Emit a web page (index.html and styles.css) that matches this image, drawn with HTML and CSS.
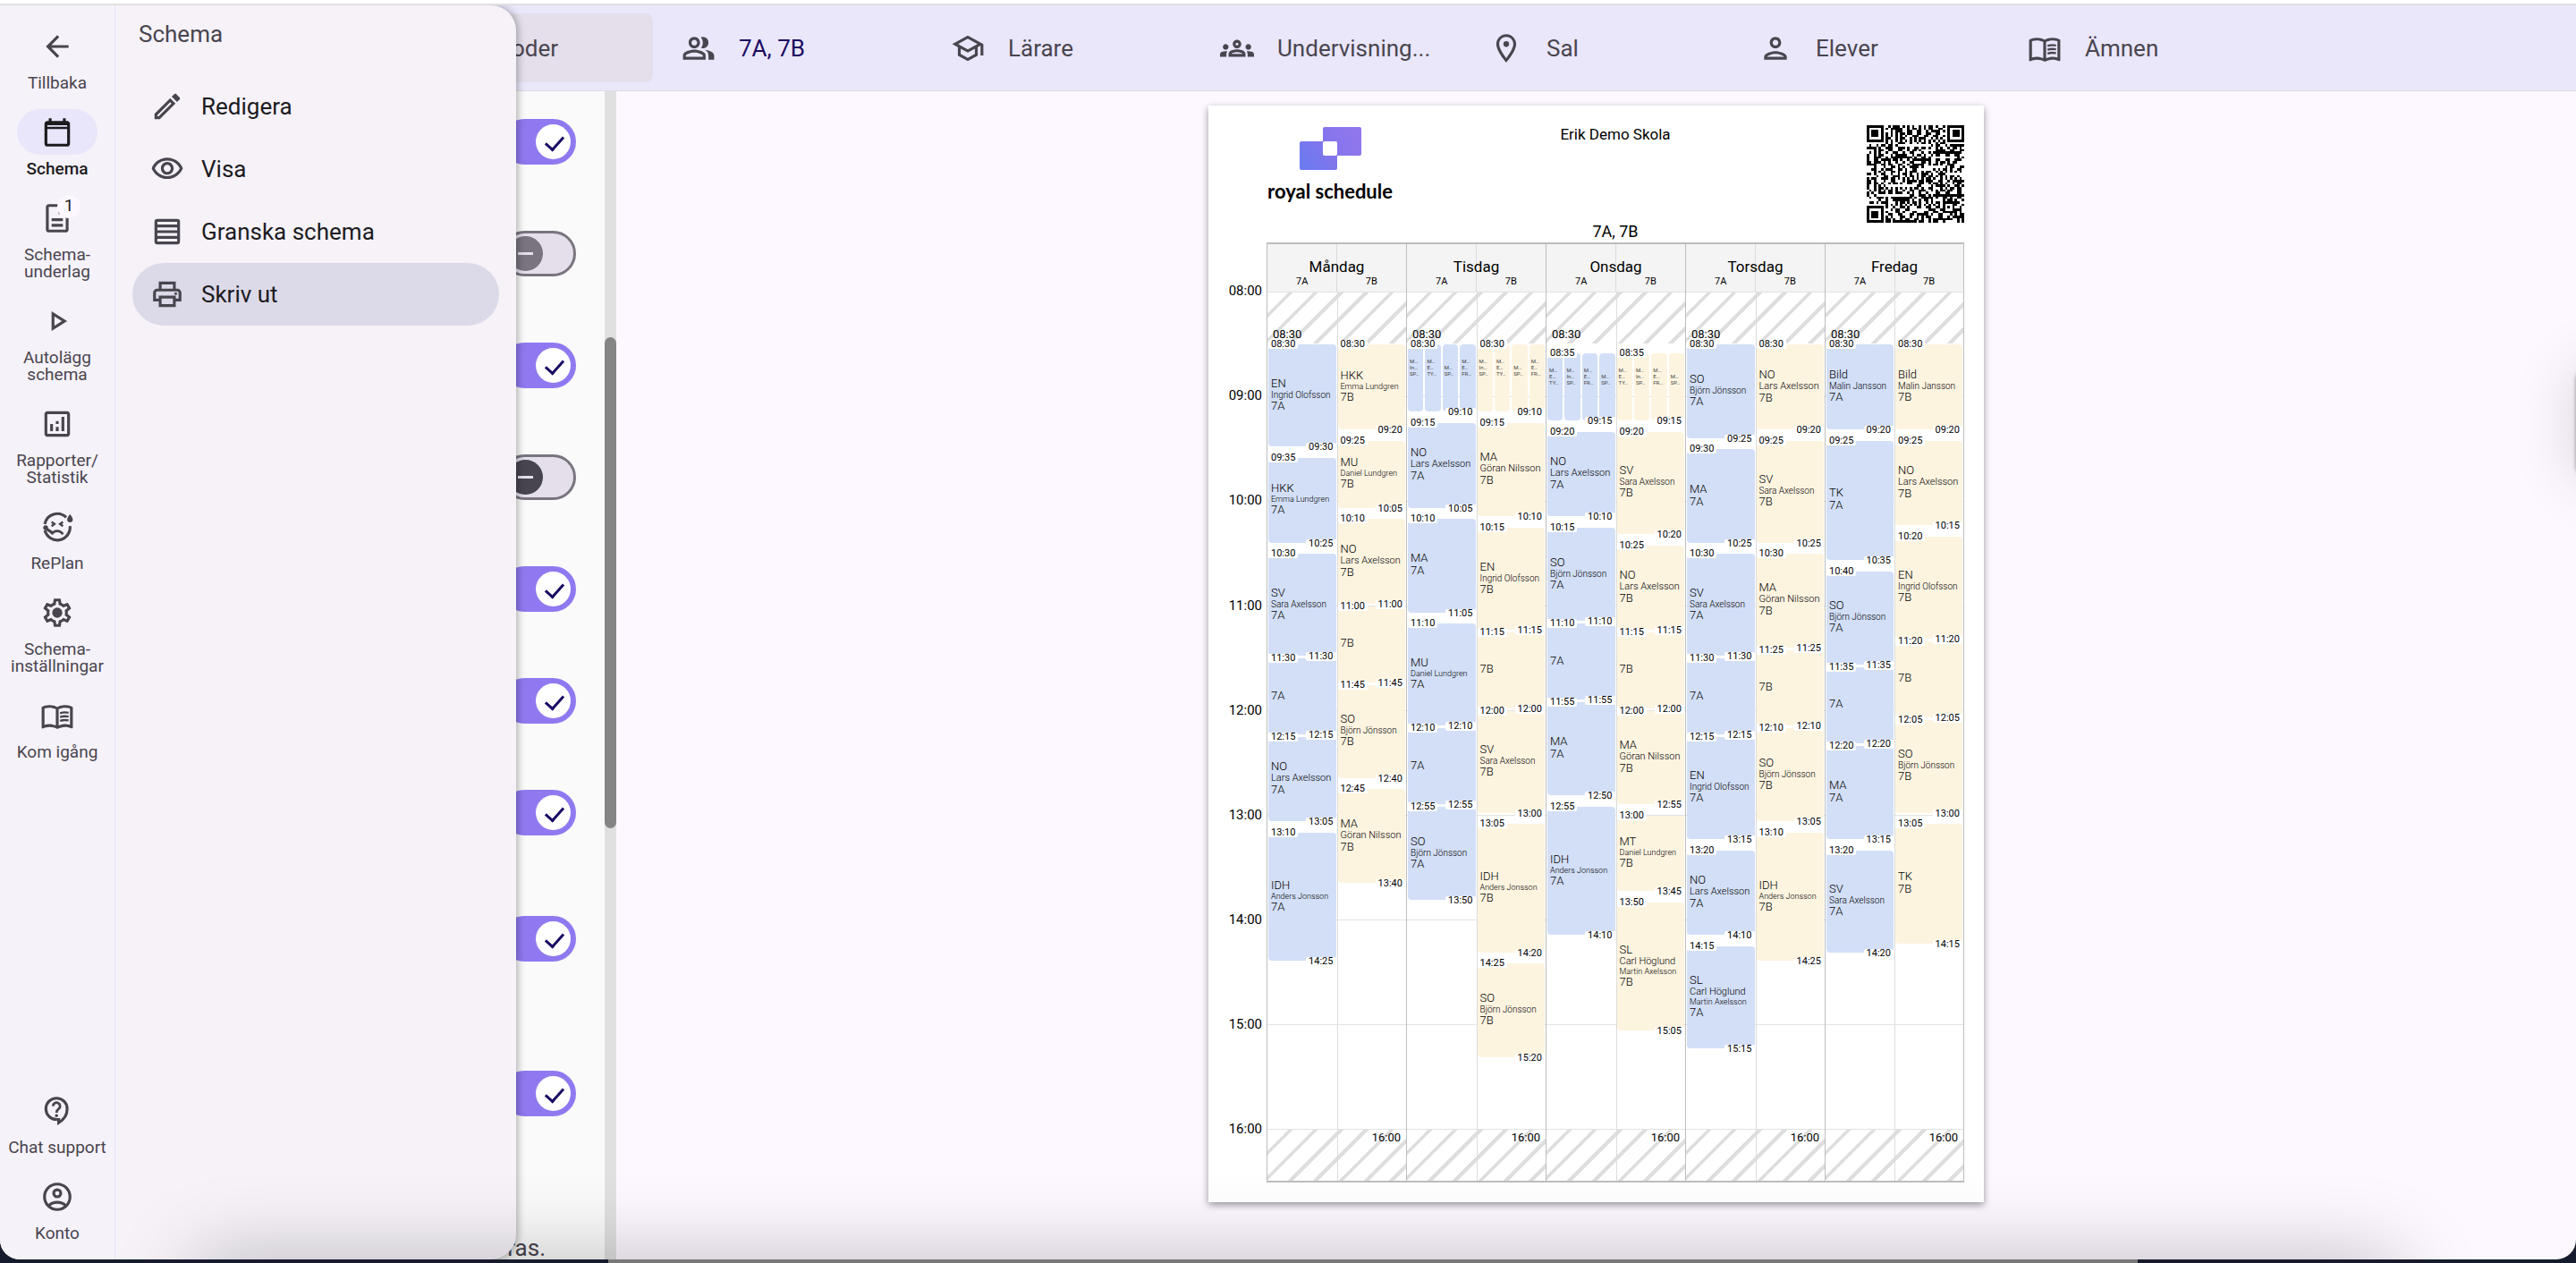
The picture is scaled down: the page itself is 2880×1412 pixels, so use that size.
FILE: index.html
```html
<!DOCTYPE html>
<html lang="sv">
<head>
<meta charset="utf-8">
<meta name="viewport" content="width=device-width, initial-scale=1">
<title>Royal Schedule – Skriv ut</title>
<link rel="stylesheet" href="styles.css">
</head>
<body>
<svg class="sprite" aria-hidden="true">
  <symbol id="i-back" viewBox="0 0 24 24"><path d="M20 11H7.83l5.59-5.59L12 4l-8 8 8 8 1.41-1.41L7.83 13H20v-2z"/></symbol>
  <symbol id="i-calendar" viewBox="0 0 24 24"><path fill-rule="evenodd" d="M19 4h-1V2h-2v2H8V2H6v2H5c-1.1 0-2 .9-2 2v14c0 1.1.9 2 2 2h14c1.1 0 2-.9 2-2V6c0-1.1-.9-2-2-2zm0 16H5V9.600h14V20zm0-12H5V7h14v1z"/></symbol>
  <symbol id="i-doc" viewBox="0 0 24 24"><path d="M8 16h8v2H8zm0-4h8v2H8zm6-10H6c-1.1 0-2 .9-2 2v16c0 1.1.89 2 1.99 2H18c1.1 0 2-.9 2-2V8l-6-6zm4 18H6V4h7v5h5v11z"/></symbol>
  <symbol id="i-play" viewBox="0 0 24 24"><path d="M10 8.640 15.270 12 10 15.360V8.640M8 5v14l11-7L8 5z"/></symbol>
  <symbol id="i-stats" viewBox="0 0 24 24"><path d="M19 3H5c-1.1 0-2 .9-2 2v14c0 1.1.9 2 2 2h14c1.1 0 2-.9 2-2V5c0-1.1-.9-2-2-2zm0 16H5V5h14v14zM7 12h2v5H7zM15 7h2v10h-2zM11 14h2v3h-2zM11 10h2v2h-2z"/></symbol>
  <symbol id="i-sick" viewBox="0 0 24 24">
    <g fill="none" stroke="currentColor" stroke-width="2">
      <path d="M18.300 5.300A9 9 0 0 0 3.200 10"/><path d="M3.300 14.500A9 9 0 0 0 21 11.500"/>
      <path stroke-width="1.600" d="M8 8.500l2 1.500-2 1.500M16 8.500l-2 1.500 2 1.500"/>
      <path d="M3.500 12.800l5 3.400"/><path stroke-width="1.800" d="M8 17.300c1-1.700 2.300-2.400 4-2.400s3 .7 4 2.400"/>
    </g>
    <circle cx="3.800" cy="12.600" r="1.700"/>
    <path d="M21 3s2 2.600 2 3.800a2 2 0 0 1-4 0C19 5.600 21 3 21 3z"/>
  </symbol>
  <symbol id="i-gear" viewBox="0 0 24 24"><path d="M19.43 12.98c.04-.32.07-.64.07-.98 0-.34-.03-.66-.07-.98l2.11-1.65c.19-.15.24-.42.12-.64l-2-3.46c-.09-.16-.26-.25-.44-.25-.06 0-.12.01-.17.03l-2.49 1c-.52-.4-1.08-.73-1.69-.98l-.38-2.65C14.46 2.18 14.25 2 14 2h-4c-.25 0-.46.18-.49.42l-.38 2.65c-.61.25-1.17.59-1.69.98l-2.49-1c-.06-.02-.12-.03-.18-.03-.17 0-.34.09-.43.25l-2 3.46c-.13.22-.07.49.12.64l2.11 1.65c-.04.32-.07.65-.07.98 0 .33.03.66.07.98l-2.11 1.65c-.19.15-.24.42-.12.64l2 3.46c.09.16.26.25.44.25.06 0 .12-.01.17-.03l2.49-1c.52.4 1.08.73 1.69.98l.38 2.65c.03.24.24.42.49.42h4c.25 0 .46-.18.49-.42l.38-2.65c.61-.25 1.17-.59 1.69-.98l2.49 1c.06.02.12.03.18.03.17 0 .34-.09.43-.25l2-3.46c.12-.22.07-.49-.12-.64l-2.11-1.65zm-1.98-1.71c.04.31.05.52.05.73 0 .21-.02.43-.05.73l-.14 1.13.89.7 1.08.84-.7 1.21-1.27-.51-1.04-.42-.9.68c-.43.32-.84.56-1.25.73l-1.06.43-.16 1.13-.2 1.35h-1.4l-.19-1.35-.16-1.13-1.06-.43c-.43-.18-.83-.41-1.23-.71l-.91-.7-1.06.43-1.27.51-.7-1.21 1.08-.84.89-.7-.14-1.13c-.03-.31-.05-.54-.05-.74s.02-.43.05-.73l.14-1.13-.89-.7-1.08-.84.7-1.21 1.27.51 1.04.42.9-.68c.43-.32.84-.56 1.25-.73l1.06-.43.16-1.13.2-1.35h1.39l.19 1.35.16 1.13 1.06.43c.43.18.83.41 1.23.71l.91.7 1.06-.43 1.27-.51.7 1.21-1.07.85-.89.7.14 1.13z"/><circle cx="12" cy="12" r="3.600"/></symbol>
  <symbol id="i-book" viewBox="0 0 24 24"><path d="M21 5c-1.110-.35-2.330-.5-3.500-.5-1.950 0-4.050.4-5.500 1.500-1.450-1.100-3.550-1.500-5.500-1.500S2.450 4.900 1 6v14.650c0 .25.25.5.5.5.1 0 .15-.05.25-.05C3.100 20.450 5.050 20 6.500 20c1.950 0 4.050.4 5.500 1.500 1.350-.85 3.800-1.500 5.500-1.500 1.650 0 3.350.3 4.750 1.050.1.05.15.05.25.05.25 0 .5-.25.5-.5V6c-.6-.45-1.250-.75-2-1zM3 18.500V7c1.100-.35 2.300-.5 3.500-.5 1.340 0 3.130.41 4.500.99v11.500C9.630 18.410 7.840 18 6.500 18c-1.200 0-2.400.15-3.500.5zm18 0c-1.100-.35-2.300-.5-3.500-.5-1.340 0-3.130.41-4.500.99V7.490c1.370-.59 3.160-.99 4.500-.99 1.200 0 2.400.15 3.500.5v11.500z"/><path fill="none" stroke="currentColor" stroke-width="1.500" d="M14 10.300c1.800-.6 4-.7 6-.3M14 13c1.800-.6 4-.7 6-.3M14 15.700c1.800-.6 4-.7 6-.3"/></symbol>
  <symbol id="i-support" viewBox="0 0 24 24"><path fill="none" stroke="currentColor" stroke-width="2" d="M13 18v2.300c3.700-2.300 6-5.900 6-9.800A7.500 7.500 0 1 0 11.500 18H13z"/><path fill="none" stroke="currentColor" stroke-width="1.800" d="M9 8.600a2.500 2.500 0 1 1 3.900 2.100c-.9.6-1.400 1.100-1.400 2.500"/><circle cx="11.500" cy="15.300" r="1.100"/></symbol>
  <symbol id="i-account" viewBox="0 0 24 24"><g fill="none" stroke="currentColor" stroke-width="2"><circle cx="12" cy="12" r="9"/><circle cx="12" cy="9.500" r="2.500"/><path d="M6 18.200c1.600-1.500 3.700-2.300 6-2.300s4.400.8 6 2.300"/></g></symbol>
  <symbol id="i-edit" viewBox="0 0 24 24"><path d="M14.060 9.020l.92.92L5.920 19H5v-.92l9.060-9.060M17.660 3c-.25 0-.51.1-.7.29l-1.830 1.830 3.750 3.750 1.830-1.830c.39-.39.39-1.020 0-1.410l-2.340-2.340c-.2-.2-.45-.29-.71-.29zm-3.600 3.190L3 17.250V21h3.750L17.810 9.940l-3.750-3.750z"/></symbol>
  <symbol id="i-eye" viewBox="0 0 24 24"><path d="M12 6c3.790 0 7.170 2.130 8.820 5.500C19.170 14.870 15.790 17 12 17s-7.170-2.130-8.820-5.500C4.830 8.130 8.210 6 12 6m0-2C7 4 2.730 7.110 1 11.500 2.730 15.890 7 19 12 19s9.270-3.110 11-7.500C21.270 7.110 17 4 12 4zm0 5c1.380 0 2.500 1.120 2.500 2.500S13.380 14 12 14s-2.500-1.120-2.500-2.500S10.620 9 12 9m0-2c-2.480 0-4.500 2.020-4.500 4.500S9.520 16 12 16s4.500-2.020 4.500-4.500S14.480 7 12 7z"/></symbol>
  <symbol id="i-rows" viewBox="0 0 24 24"><g fill="none" stroke="currentColor" stroke-width="2"><rect x="4" y="4" width="16" height="16" rx="1"/><path d="M4 8h16M4 12h16M4 16h16"/></g></symbol>
  <symbol id="i-print" viewBox="0 0 24 24"><path d="M19 8h-1V3H6v5H5c-1.660 0-3 1.340-3 3v6h4v4h12v-4h4v-6c0-1.660-1.340-3-3-3zM8 5h8v3H8V5zm8 12v2H8v-4h8v2zm2-2v-2H6v2H4v-4c0-.55.45-1 1-1h14c.55 0 1 .45 1 1v4h-2z"/><circle cx="18" cy="11.500" r="1"/></symbol>
  <symbol id="i-people" viewBox="0 0 24 24"><path d="M16.670 13.130C18.040 14.060 19 15.320 19 17v3h4v-3c0-2.180-3.570-3.470-6.330-3.870zM15 12c2.210 0 4-1.790 4-4s-1.790-4-4-4c-.47 0-.91.1-1.330.24C14.500 5.270 15 6.580 15 8s-.5 2.730-1.330 3.760c.42.14.86.24 1.330.24zM9 12c2.210 0 4-1.790 4-4s-1.790-4-4-4-4 1.790-4 4 1.790 4 4 4zm0-6c1.100 0 2 .9 2 2s-.9 2-2 2-2-.9-2-2 .9-2 2-2zM9 13c-2.670 0-8 1.340-8 4v3h16v-3c0-2.660-5.330-4-8-4zm6 5H3v-.99C3.200 16.290 6.300 15 9 15s5.800 1.290 6 2v1z"/></symbol>
  <symbol id="i-school" viewBox="0 0 24 24"><path d="M12 3L1 9l4 2.180v6L12 21l7-3.820v-6l2-1.090V17h2V9L12 3zm6.820 6L12 12.720 5.180 9 12 5.280 18.820 9zM17 15.990l-5 2.730-5-2.730v-3.720L12 15l5-2.730v3.720z"/></symbol>
  <symbol id="i-groups" viewBox="0 0 24 24"><path d="M4 13c1.100 0 2-.9 2-2s-.9-2-2-2-2 .9-2 2 .9 2 2 2zm1.130 1.100c-.37-.06-.74-.1-1.130-.1-.99 0-1.930.21-2.780.58C.48 14.900 0 15.620 0 16.430V18h4.500v-1.610c0-.83.23-1.610.63-2.290zM20 13c1.100 0 2-.9 2-2s-.9-2-2-2-2 .9-2 2 .9 2 2 2zm4 3.430c0-.81-.48-1.530-1.220-1.850-.85-.37-1.790-.58-2.780-.58-.39 0-.76.04-1.130.1.4.68.63 1.460.63 2.290V18H24v-1.570zm-7.760-2.780c-1.170-.52-2.610-.9-4.240-.9s-3.070.39-4.240.9C6.680 14.130 6 15.210 6 16.390V18h12v-1.610c0-1.180-.68-2.260-1.760-2.740zM8.070 16c.09-.23.13-.39.91-.69.97-.38 1.990-.56 3.020-.56s2.050.18 3.020.56c.77.3.81.46.91.69H8.070zM12 8c.55 0 1 .45 1 1s-.45 1-1 1-1-.45-1-1 .45-1 1-1m0-2c-1.660 0-3 1.340-3 3s1.340 3 3 3 3-1.340 3-3-1.340-3-3-3z"/></symbol>
  <symbol id="i-place" viewBox="0 0 24 24"><path d="M12 2C8.130 2 5 5.130 5 9c0 5.250 7 13 7 13s7-7.750 7-13c0-3.870-3.130-7-7-7zM7 9c0-2.760 2.240-5 5-5s5 2.240 5 5c0 2.880-2.880 7.190-5 9.880C9.920 16.210 7 11.850 7 9z"/><circle cx="12" cy="9" r="2"/></symbol>
  <symbol id="i-person" viewBox="0 0 24 24"><path d="M12 6c1.100 0 2 .9 2 2s-.9 2-2 2-2-.9-2-2 .9-2 2-2m0 10c2.700 0 5.800 1.290 6 2H6c.23-.72 3.310-2 6-2m0-12C9.790 4 8 5.790 8 8s1.790 4 4 4 4-1.790 4-4-1.790-4-4-4zm0 10c-2.670 0-8 1.340-8 4v2h16v-2c0-2.660-5.330-4-8-4z"/></symbol>
</svg>

<div class="desktop">
  <div class="window">
    <nav class="rail" aria-label="Huvudmeny">
      <a class="rail-item" href="#"><span class="pill"><svg class="icon"><use href="#i-back"/></svg></span><span>Tillbaka</span></a>
      <a class="rail-item active" href="#"><span class="pill"><svg class="icon"><use href="#i-calendar"/></svg></span><span>Schema</span></a>
      <a class="rail-item" href="#"><span class="pill"><svg class="icon"><use href="#i-doc"/></svg><b class="badge">1</b></span><span>Schema-<br>underlag</span></a>
      <a class="rail-item" href="#"><span class="pill"><svg class="icon"><use href="#i-play"/></svg></span><span>Autolägg<br>schema</span></a>
      <a class="rail-item" href="#"><span class="pill"><svg class="icon"><use href="#i-stats"/></svg></span><span>Rapporter/<br>Statistik</span></a>
      <a class="rail-item" href="#"><span class="pill"><svg class="icon"><use href="#i-sick"/></svg></span><span>RePlan</span></a>
      <a class="rail-item" href="#"><span class="pill"><svg class="icon"><use href="#i-gear"/></svg></span><span>Schema-<br>inställningar</span></a>
      <a class="rail-item" href="#"><span class="pill"><svg class="icon"><use href="#i-book"/></svg></span><span>Kom igång</span></a>
      <a class="rail-item push" href="#"><span class="pill"><svg class="icon"><use href="#i-support"/></svg></span><span>Chat support</span></a>
      <a class="rail-item" href="#"><span class="pill"><svg class="icon"><use href="#i-account"/></svg></span><span>Konto</span></a>
    </nav>

    <div class="content">
      <header class="topbar">
        <button class="chip selected"><span class="chip-text">Perioder</span></button>
        <button class="chip chosen"><svg class="icon"><use href="#i-people"/></svg><span class="chip-text">7A, 7B</span></button>
        <button class="chip"><svg class="icon"><use href="#i-school"/></svg><span class="chip-text">Lärare</span></button>
        <button class="chip"><svg class="icon"><use href="#i-groups"/></svg><span class="chip-text">Undervisning...</span></button>
        <button class="chip"><svg class="icon"><use href="#i-place"/></svg><span class="chip-text">Sal</span></button>
        <button class="chip"><svg class="icon"><use href="#i-person"/></svg><span class="chip-text">Elever</span></button>
        <button class="chip"><svg class="icon"><use href="#i-book"/></svg><span class="chip-text">Ämnen</span></button>
      </header>
      <div class="split">
        <section class="settings" aria-label="Utskriftsval">
          <div class="settings-list">
            <input class="switch" type="checkbox" role="switch" aria-label="Val 1" checked>
            <input class="switch muted" type="checkbox" role="switch" aria-label="Val 2">
            <input class="switch" type="checkbox" role="switch" aria-label="Val 3" checked>
            <input class="switch" type="checkbox" role="switch" aria-label="Val 4">
            <input class="switch" type="checkbox" role="switch" aria-label="Val 5" checked>
            <input class="switch" type="checkbox" role="switch" aria-label="Val 6" checked>
            <input class="switch" type="checkbox" role="switch" aria-label="Val 7" checked>
            <input class="switch after-note" type="checkbox" role="switch" aria-label="Val 8" checked>
            <input class="switch after-section" type="checkbox" role="switch" aria-label="Val 9" checked>
            <p class="settings-note">ras.</p>
          </div>
          <div class="track"><div class="thumb"></div></div>
        </section>

        <main class="preview">
          <article class="paper">
            <header class="paper-head">
              <div class="logo">
                <svg class="logo-mark" viewBox="0 0 69 48" aria-hidden="true">
                  <defs><linearGradient id="brand" gradientUnits="userSpaceOnUse" x1="0" y1="48" x2="69" y2="0"><stop offset="0" stop-color="#687bf0"/><stop offset=".5" stop-color="#8475ec"/><stop offset="1" stop-color="#9577ee"/></linearGradient></defs>
                  <rect x="26" y="0" width="43" height="32" rx="2" fill="url(#brand)"/>
                  <rect x="0" y="16" width="42" height="32" rx="2" fill="url(#brand)"/>
                  <rect x="26" y="16" width="16" height="16" rx="2" fill="#fff"/>
                </svg>
                <span class="logo-text">royal schedule</span>
              </div>
              <h1 class="school">Erik Demo Skola</h1>
              <svg class="qr" id="qr" viewBox="0 0 41 41" shape-rendering="crispEdges" role="img" aria-label="QR-kod"></svg>
            </header>
            <h2 class="classes">7A, 7B</h2>
            <div class="timetable" id="timetable"></div>
          </article>
        </main>
      </div>
    </div>

    <aside class="drawer">
      <h2 class="drawer-title">Schema</h2>
      <a class="drawer-item" href="#"><svg class="icon"><use href="#i-edit"/></svg>Redigera</a>
      <a class="drawer-item" href="#"><svg class="icon"><use href="#i-eye"/></svg>Visa</a>
      <a class="drawer-item" href="#"><svg class="icon"><use href="#i-rows"/></svg>Granska schema</a>
      <a class="drawer-item current" href="#"><svg class="icon"><use href="#i-print"/></svg>Skriv ut</a>
    </aside>
    <div class="shade-bottom"></div>
    <div class="shade-side"></div>
  </div>
  <div class="dock"></div>
</div>
<script src="app.js"></script>
</body>
</html>
```

FILE: styles.css
```css
* { box-sizing: border-box; }

body {
  margin: 0;
  font-family: Roboto, "Liberation Sans", sans-serif;
  color: #1c1b1f;
  background: #161b2d;
}

h1, h2, p { margin: 0; font-weight: 400; }
a { color: inherit; text-decoration: none; }
button { font: inherit; border: 0; background: none; cursor: pointer; }
.sprite { display: none; }
.icon { width: 38px; height: 38px; flex: none; fill: currentColor; color: #49454f; }

.desktop {
  height: 100vh;
  display: flex;
  flex-direction: column;
  overflow: hidden;
  border-top: 4px solid #fff;
}
.dock { height: 4px; flex: none; margin: 0 17% 0 680px; background: #787878; }

.window {
  flex: 1;
  min-height: 0;
  display: flex;
  position: relative;
  overflow: hidden;
  border-top: 2px solid #e0e0e0;
  border-radius: 0 0 22px 22px;
  background: #fdf8ff;
}

/* Navigation rail */
.rail {
  width: 129px;
  flex: none;
  display: flex;
  flex-direction: column;
  align-items: center;
  gap: 20px;
  padding: 20px 0;
  background: #f6f2f9;
  border-right: 1px solid #e8e5fa;
}
.rail-item {
  display: flex;
  flex-direction: column;
  align-items: center;
  gap: 6px;
  font-size: 19px;
  line-height: 19px;
  text-align: center;
  white-space: nowrap;
  color: #49454f;
}
.pill {
  position: relative;
  width: 90px;
  height: 51px;
  border-radius: 26px;
  display: flex;
  align-items: center;
  justify-content: center;
}
.active { color: #1c1b1f; font-weight: 500; }
.active .pill { background: #e9e6fb; }
.active .icon { color: #1c1b1f; }
.push { margin-top: auto; }
.badge {
  position: absolute;
  top: 0;
  right: 19px;
  width: 26px;
  height: 26px;
  border-radius: 13px;
  background: #fdf8ff;
  font-weight: 400;
  line-height: 24px;
  color: #1c1b1f;
}

/* Content */
.content { flex: 1; min-width: 0; display: flex; flex-direction: column; }
.topbar {
  height: 96px;
  flex: none;
  display: flex;
  align-items: center;
  gap: 8px;
  padding: 0 24px 0 308px;
  background: #eae7fb;
  border-bottom: 1px solid #e0dee6;
}
.chip {
  width: 293px;
  height: 77px;
  flex: none;
  display: flex;
  align-items: center;
  gap: 26px;
  padding: 0 24px;
  border-radius: 8px;
  font-size: 26px;
  line-height: 32px;
  color: #49454f;
}
.chip.selected { background: #e4dfea; padding: 0 106px 0 24px; justify-content: flex-end; }
.chip.chosen { color: #1b0a63; }
.chip-text { white-space: nowrap; }

.split { flex: 1; min-height: 0; display: flex; }
.settings {
  width: 560px;
  flex: none;
  display: flex;
  overflow: hidden;
  background: #fafafa;
}
.settings-list {
  flex: 1;
  display: flex;
  flex-direction: column;
  align-items: flex-end;
  gap: 74px;
  padding: 31px 32px 0 0;
}
.settings-note { margin: 58px 34px 0 0; font-size: 26px; line-height: 30px; color: #49454f; }

.switch {
  appearance: none;
  width: 83px;
  height: 51px;
  flex: none;
  margin: 0;
  position: relative;
  border: 3px solid #79747e;
  border-radius: 26px;
  background: #e4dfea;
}
.switch::before {
  content: "";
  position: absolute;
  left: 4px;
  top: 3px;
  width: 39px;
  height: 39px;
  border-radius: 50%;
  background: #49454f;
}
.switch::after {
  content: "";
  position: absolute;
  left: 15px;
  top: 21px;
  width: 17px;
  height: 3px;
  background: #e4dfea;
}
.switch.muted::before { background: #79747e; }
.switch:checked { background: #9079f0; border-color: #9079f0; }
.switch:checked::before { left: 35px; background: #fff; }
.switch:checked::after {
  left: 50px;
  top: 12px;
  width: 9px;
  height: 17px;
  border: solid #1b0a63;
  border-width: 0 3px 3px 0;
  background: none;
  transform: rotate(42deg);
}
.after-note { margin-top: 16px; }
.after-section { margin-top: 48px; }

.track { width: 13px; flex: none; padding-top: 275px; background: #e0e0e0; }
.thumb { height: 549px; border-radius: 7px; background: #858585; }

/* Paper preview */
.preview {
  flex: 1;
  min-width: 0;
  display: flex;
  justify-content: center;
  padding: 16px 0 64px;
}
.paper {
  height: 100%;
  aspect-ratio: 867 / 1226;
  display: flex;
  flex-direction: column;
  padding: 22px 22px 22px 0;
  background: #fff;
  color: #000;
  box-shadow: 0 3px 8px rgba(0, 0, 0, .4);
}
.paper-head {
  display: grid;
  grid-template-columns: 1fr auto 1fr;
  align-items: start;
  margin-left: 65px;
}
.logo { display: flex; flex-direction: column; align-items: center; gap: 8px; justify-self: start; padding: 2px 0 0 1px; }
.logo-mark { width: 69px; height: 48px; }
.logo-text { font-family: Lato, sans-serif; font-weight: 700; font-size: 22px; line-height: 32px; }
.school { font-size: 17px; line-height: 20px; }
.qr { width: 109px; height: 109px; justify-self: end; }
.classes { margin: 0 0 2px 65px; text-align: center; font-size: 18px; line-height: 20px; }

.timetable {
  flex: 1;
  display: grid;
  grid-template-columns: 65px repeat(5, 1fr);
  grid-template-rows: 55px 1fr;
}
.day-head {
  display: grid;
  grid-template-columns: 1fr 1fr;
  align-content: end;
  padding-bottom: 4px;
  text-align: center;
  border: solid #bdbdbd;
  border-width: 2px 0 0 1px;
  background: linear-gradient(#dcdcdc, #dcdcdc) 50% 0 / 1px 100% no-repeat #f4f4f4;
}
.day-head b { grid-column: 1 / 3; font-weight: 400; font-size: 17px; line-height: 20px; }
.day-head span { font-size: 11px; line-height: 14px; }
.hours {
  grid-column: 1;
  display: grid;
  grid-template-rows: repeat(102, 1fr);
}
.hour {
  height: 20px;
  margin: -11px 5px 0 0;
  text-align: right;
  font-size: 15px;
  line-height: 20px;
}
.day {
  display: grid;
  grid-template-columns: 1fr 1fr;
  grid-template-rows: repeat(102, 1fr);
  border-left: 1px solid #bdbdbd;
  border-bottom: 2px solid #bdbdbd;
}
.day-head:nth-child(6), .day:last-child { border-right: 1px solid #bdbdbd; }
.line { grid-column: 1 / 3; border-top: 1px solid #e2e2e2; }
.divider { grid-column: 2; grid-row: 1 / -1; border-left: 1px solid #dcdcdc; }
.closed {
  grid-column: 1 / 3;
  display: flex;
  font-size: 13px;
  line-height: 20px;
  padding: 0 6px;
  background: repeating-linear-gradient(135deg, #dedede 0 1px, transparent 1px 17px, #dedede 17px 20px);
}
.closed.before { align-items: flex-end; }
.closed.after { justify-content: flex-end; }

.lesson {
  position: relative;
  min-height: 0;
  display: flex;
  gap: 2px;
  margin: 1px 1px 2px 1px;
}
.card {
  flex: 1;
  min-width: 0;
  display: flex;
  flex-direction: column;
  justify-content: center;
  padding: 0 0 2px 3px;
  border-radius: 4px;
  font-size: 13px;
  line-height: 14px;
  font-weight: 300;
  white-space: nowrap;
}
.a .card { background: #d3dff7; }
.b .card { background: #fdf4e0; }
.size-l { font-size: 11px; line-height: 12px; }
.size-m { font-size: 10px; line-height: 11px; }
.size-s { font-size: 9px; line-height: 10px; }
.parallel .card {
  justify-content: flex-end;
  padding: 0 0 39px 2px;
  font-size: 6px;
  line-height: 7px;
  font-weight: 400;
  color: #444;
}
.time {
  position: absolute;
  z-index: 1;
  height: 10px;
  padding: 0 3px;
  border-radius: 2px;
  background: #fff;
  font-size: 11px;
  line-height: 10px;
}
.time.start { left: 0; top: -5px; }
.time.end { right: 0; bottom: -6px; }

/* Drawer over the content */
.drawer {
  position: absolute;
  top: 0;
  bottom: 0;
  left: 129px;
  width: 448px;
  padding: 16px 19px;
  border-radius: 0 28px 28px 0;
  background: #f6f2f8;
  box-shadow: 2px 0 8px rgba(0, 0, 0, .3);
  clip-path: inset(0 -40px 0 0);
}
.drawer-title { padding: 0 7px; margin-bottom: 30px; font-size: 26px; line-height: 32px; color: #49454f; }
.drawer-item {
  display: flex;
  align-items: center;
  gap: 19px;
  height: 70px;
  padding: 0 20px;
  border-radius: 35px;
  font-size: 26px;
  line-height: 32px;
}
.drawer-item.current { background: #dcdae8; }

/* Soft shadows cast by the panels outside the window */
.shade-bottom {
  position: absolute;
  top: 100%;
  left: 220px;
  right: 200px;
  height: 80px;
  box-shadow: 0 0 90px rgba(0, 0, 0, .26);
}
.shade-side {
  position: absolute;
  top: 29%;
  left: 100%;
  width: 80px;
  height: 120px;
  border-radius: 12px;
  box-shadow: 0 0 4px rgba(0, 0, 0, .4), 0 0 70px rgba(0, 0, 0, .16);
}
```

FILE: app.js
```js
const START = 8 * 60;
const STEP = 5;
const NAMES = {
  Ingrid: ["Ingrid Olofsson", "m"],
  Emma: ["Emma Lundgren", "s"],
  Sara: ["Sara Axelsson", "m"],
  Lars: ["Lars Axelsson", "l"],
  Anders: ["Anders Jonsson", "s"],
  Daniel: ["Daniel Lundgren", "s"],
  Bjorn: ["Björn Jönsson", "m"],
  Goran: ["Göran Nilsson", "l"],
  Malin: ["Malin Jansson", "m"],
  Carl: ["Carl Höglund", "l"],
  Martin: ["Martin Axelsson", "s"]
};

const TUE = [["M…", "In…", "SP…"], ["M…", "E…", "TY…"], ["M…", "SP…"], ["M…", "E…", "FR…"]];
const WED = [["M…", "E…", "TY…"], ["M…", "In…", "SP…"], ["M…", "E…", "FR…"], ["M…", "SP…"]];

// Each lesson: start, end, subject (or parallel groups), teachers
const DAYS = [
  ["Måndag",
    [["08:30", "09:30", "EN", "Ingrid"], ["09:35", "10:25", "HKK", "Emma"], ["10:30", "11:30", "SV", "Sara"],
     ["11:30", "12:15"], ["12:15", "13:05", "NO", "Lars"], ["13:10", "14:25", "IDH", "Anders"]],
    [["08:30", "09:20", "HKK", "Emma"], ["09:25", "10:05", "MU", "Daniel"], ["10:10", "11:00", "NO", "Lars"],
     ["11:00", "11:45"], ["11:45", "12:40", "SO", "Bjorn"], ["12:45", "13:40", "MA", "Goran"]]],
  ["Tisdag",
    [["08:30", "09:10", TUE], ["09:15", "10:05", "NO", "Lars"], ["10:10", "11:05", "MA"],
     ["11:10", "12:10", "MU", "Daniel"], ["12:10", "12:55"], ["12:55", "13:50", "SO", "Bjorn"]],
    [["08:30", "09:10", TUE], ["09:15", "10:10", "MA", "Goran"], ["10:15", "11:15", "EN", "Ingrid"],
     ["11:15", "12:00"], ["12:00", "13:00", "SV", "Sara"], ["13:05", "14:20", "IDH", "Anders"], ["14:25", "15:20", "SO", "Bjorn"]]],
  ["Onsdag",
    [["08:35", "09:15", WED], ["09:20", "10:10", "NO", "Lars"], ["10:15", "11:10", "SO", "Bjorn"],
     ["11:10", "11:55"], ["11:55", "12:50", "MA"], ["12:55", "14:10", "IDH", "Anders"]],
    [["08:35", "09:15", WED], ["09:20", "10:20", "SV", "Sara"], ["10:25", "11:15", "NO", "Lars"],
     ["11:15", "12:00"], ["12:00", "12:55", "MA", "Goran"], ["13:00", "13:45", "MT", "Daniel"], ["13:50", "15:05", "SL", "Carl", "Martin"]]],
  ["Torsdag",
    [["08:30", "09:25", "SO", "Bjorn"], ["09:30", "10:25", "MA"], ["10:30", "11:30", "SV", "Sara"],
     ["11:30", "12:15"], ["12:15", "13:15", "EN", "Ingrid"], ["13:20", "14:10", "NO", "Lars"], ["14:15", "15:15", "SL", "Carl", "Martin"]],
    [["08:30", "09:20", "NO", "Lars"], ["09:25", "10:25", "SV", "Sara"], ["10:30", "11:25", "MA", "Goran"],
     ["11:25", "12:10"], ["12:10", "13:05", "SO", "Bjorn"], ["13:10", "14:25", "IDH", "Anders"]]],
  ["Fredag",
    [["08:30", "09:20", "Bild", "Malin"], ["09:25", "10:35", "TK"], ["10:40", "11:35", "SO", "Bjorn"],
     ["11:35", "12:20"], ["12:20", "13:15", "MA"], ["13:20", "14:20", "SV", "Sara"]],
    [["08:30", "09:20", "Bild", "Malin"], ["09:25", "10:15", "NO", "Lars"], ["10:20", "11:20", "EN", "Ingrid"],
     ["11:20", "12:05"], ["12:05", "13:00", "SO", "Bjorn"], ["13:05", "14:15", "TK"]]]
];

const row = (time) => {
  const [h, m] = time.split(":").map(Number);
  return (h * 60 + m - START) / STEP + 1;
};

function lesson([from, to, subject, ...teachers], column) {
  const parallel = Array.isArray(subject);
  const group = column === 1 ? "7A" : "7B";
  const cards = parallel
    ? subject.map((lines) => `<div class="card">${lines.map((l) => `<span>${l}</span>`).join("")}</div>`).join("")
    : `<div class="card">${subject ? `<span>${subject}</span>` : ""}${teachers
        .map((t) => `<span class="size-${NAMES[t][1]}">${NAMES[t][0]}</span>`).join("")}<span>${group}</span></div>`;
  return `<div class="lesson ${column === 1 ? "a" : "b"}${parallel ? " parallel" : ""}" style="grid-area:${row(from)}/${column}/${row(to)}">
    ${cards}<time class="time start">${from}</time><time class="time end">${to}</time></div>`;
}

function timetable() {
  const hours = [8, 9, 10, 11, 12, 13, 14, 15, 16];
  const pad = (h) => String(h).padStart(2, "0") + ":00";
  let html = "<div></div>";
  html += DAYS.map(([name]) => `<div class="day-head"><b>${name}</b><span>7A</span><span>7B</span></div>`).join("");
  html += `<div class="hours">${hours.map((h) => `<div class="hour" style="grid-row:${row(pad(h))}">${pad(h)}</div>`).join("")}</div>`;
  html += DAYS.map(([, a, b]) => `<div class="day">
    <div class="closed before" style="grid-row:1/7">08:30</div>
    <div class="closed after" style="grid-row:97/103">16:00</div>
    <div class="divider"></div>
    ${hours.map((h) => `<div class="line" style="grid-row:${row(pad(h))}"></div>`).join("")}
    ${a.map((l) => lesson(l, 1)).join("")}${b.map((l) => lesson(l, 2)).join("")}</div>`).join("");
  document.getElementById("timetable").innerHTML = html;
}

function qr() {
  const n = 41;
  const finder = (x, y, ox, oy) => {
    const dx = x - ox, dy = y - oy;
    if (dx < -1 || dy < -1 || dx > 7 || dy > 7) return null;
    const ring = Math.max(Math.abs(dx - 3), Math.abs(dy - 3));
    return ring === 3 || ring < 2;
  };
  let seed = 20117, path = "";
  for (let y = 0; y < n; y++) for (let x = 0; x < n; x++) {
    seed = (seed * 1103515245 + 12345) % 2147483648;
    let on = finder(x, y, 0, 0) ?? finder(x, y, n - 7, 0) ?? finder(x, y, 0, n - 7);
    if (on === null) {
      const ring = Math.max(Math.abs(x - 34), Math.abs(y - 34));
      on = ring < 3 ? ring !== 1 : x === 6 || y === 6 ? (x + y) % 2 === 0 : (seed >> 12) % 2 === 0;
    }
    if (on) path += `M${x} ${y}h1v1h-1z`;
  }
  document.getElementById("qr").innerHTML = `<path d="${path}"/>`;
}

timetable();
qr();
```
